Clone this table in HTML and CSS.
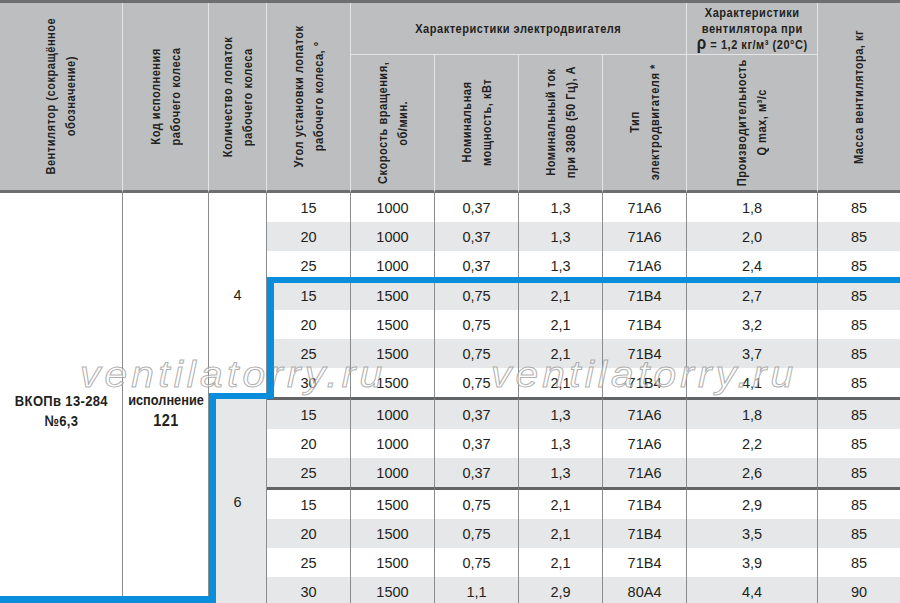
FILE: index.html
```html
<!DOCTYPE html>
<html lang="ru">
<head>
<meta charset="utf-8">
<title>ВКОПв 13-284 №6,3</title>
<link rel="stylesheet" href="styles.css">
</head>
<body>
<div class="sheet">
<table class="spec">
<colgroup>
<col class="c1"><col class="c2"><col class="c3"><col class="c4"><col class="c5"><col class="c6"><col class="c7"><col class="c8"><col class="c9"><col class="c10">
</colgroup>
<thead>
<tr class="h1">
<th rowspan="2" class="full"><div class="vbox"><div class="v">Вентилятор (сокращённое<br>обозначение)</div></div></th>
<th rowspan="2" class="full"><div class="vbox"><div class="v">Код исполнения<br>рабочего колеса</div></div></th>
<th rowspan="2" class="full"><div class="vbox"><div class="v">Количество лопаток<br>рабочего колеса</div></div></th>
<th rowspan="2" class="full"><div class="vbox"><div class="v">Угол установки лопаток<br>рабочего колеса, °</div></div></th>
<th colspan="4" class="grp"><div class="hz"><span>Характеристики электродвигателя</span></div></th>
<th class="grp grp2"><div class="hz"><span>Характеристики<br>вентилятора при<br><span class="rho">ρ</span> = 1,2 кг/м³ (20°C)</span></div></th>
<th rowspan="2" class="full last"><div class="vbox"><div class="v">Масса вентилятора, кг</div></div></th>
</tr>
<tr class="h2">
<th class="sub"><div class="vbox"><div class="v">Скорость вращения,<br>об/мин.</div></div></th>
<th class="sub"><div class="vbox"><div class="v">Номинальная<br>мощность, кВт</div></div></th>
<th class="sub"><div class="vbox"><div class="v">Номинальный ток<br>при 380В (50 Гц), А</div></div></th>
<th class="sub"><div class="vbox"><div class="v">Тип<br>электродвигателя *</div></div></th>
<th class="sub"><div class="vbox"><div class="v">Производительность<br>Q max, м³/с</div></div></th>
</tr>
</thead>
<tbody>
<tr class="r">
<td rowspan="14" class="name"><div class="hz"><span>ВКОПв 13-284<br>№6,3</span></div></td>
<td rowspan="14" class="code"><div class="hz"><span><span class="code-a">исполнение</span><br><span class="code-b">121</span></span></div></td>
<td rowspan="7" class="blades">4</td>
<td>15</td><td>1000</td><td>0,37</td><td>1,3</td><td>71A6</td><td>1,8</td><td class="last">85</td>
</tr>
<tr class="r alt"><td>20</td><td>1000</td><td>0,37</td><td>1,3</td><td>71A6</td><td>2,0</td><td class="last">85</td></tr>
<tr class="r tall"><td>25</td><td>1000</td><td>0,37</td><td>1,3</td><td>71A6</td><td>2,4</td><td class="last">85</td></tr>
<tr class="r alt"><td>15</td><td>1500</td><td>0,75</td><td>2,1</td><td>71B4</td><td>2,7</td><td class="last">85</td></tr>
<tr class="r"><td>20</td><td>1500</td><td>0,75</td><td>2,1</td><td>71B4</td><td>3,2</td><td class="last">85</td></tr>
<tr class="r alt"><td>25</td><td>1500</td><td>0,75</td><td>2,1</td><td>71B4</td><td>3,7</td><td class="last">85</td></tr>
<tr class="r"><td>30</td><td>1500</td><td>0,75</td><td>2,1</td><td>71B4</td><td>4,1</td><td class="last">85</td></tr>
<tr class="r alt sep">
<td rowspan="7" class="blades nosep">6</td>
<td>15</td><td>1000</td><td>0,37</td><td>1,3</td><td>71A6</td><td>1,8</td><td class="last">85</td>
</tr>
<tr class="r"><td>20</td><td>1000</td><td>0,37</td><td>1,3</td><td>71A6</td><td>2,2</td><td class="last">85</td></tr>
<tr class="r alt"><td>25</td><td>1000</td><td>0,37</td><td>1,3</td><td>71A6</td><td>2,6</td><td class="last">85</td></tr>
<tr class="r sep"><td>15</td><td>1500</td><td>0,75</td><td>2,1</td><td>71B4</td><td>2,9</td><td class="last">85</td></tr>
<tr class="r alt"><td>20</td><td>1500</td><td>0,75</td><td>2,1</td><td>71B4</td><td>3,5</td><td class="last">85</td></tr>
<tr class="r"><td>25</td><td>1500</td><td>0,75</td><td>2,1</td><td>71B4</td><td>3,9</td><td class="last">85</td></tr>
<tr class="r alt"><td>30</td><td>1500</td><td>1,1</td><td>2,9</td><td>80A4</td><td>4,4</td><td class="last">90</td></tr>
</tbody>
</table>
<div class="wm wm1">ventilatorry.ru</div>
<div class="wm wm2">ventilatorry.ru</div>
<svg class="frame" width="900" height="603" viewBox="0 0 900 603" aria-hidden="true">
<rect x="267" y="277" width="633" height="6"/>
<rect x="267" y="277" width="7" height="122"/>
<rect x="209" y="393" width="65" height="6"/>
<rect x="209" y="393" width="7" height="210"/>
<rect x="0" y="596" width="216" height="7"/>
</svg>
</div>
</body>
</html>
```
FILE: styles.css
```css
html, body {
  margin: 0;
  padding: 0;
  background: #ffffff;
}

.sheet {
  position: relative;
  width: 900px;
  height: 603px;
  overflow: hidden;
}

.spec {
  width: 900px;
  table-layout: fixed;
  border-collapse: separate;
  border-spacing: 0;
  border-top: 3px solid #6d6e70;
  font-family: "Liberation Sans", Arial, sans-serif;
  color: #231f20;
}

.c1 { width: 123px; }
.c2 { width: 86px; }
.c3 { width: 58px; }
.c4 { width: 84px; }
.c5 { width: 84px; }
.c6 { width: 84px; }
.c7 { width: 84px; }
.c8 { width: 84px; }
.c9 { width: 131px; }
.c10 { width: 82px; }

thead th {
  background: #bcbec0;
  padding: 0;
  font-family: "Liberation Sans", Arial, sans-serif;
  font-weight: bold;
  font-size: 13px;
  letter-spacing: 0.6px;
  color: #231f20;
  text-align: center;
  vertical-align: middle;
  border-right: 1px solid #e4e5e6;
  line-height: 16px;
}

thead th.last { border-right: 0; }

.h1 { height: 52px; }
.h2 { height: 138px; }

.full, .sub {
  border-bottom: 3px solid #6d6e70;
}

.grp {
  border-bottom: 1px solid #e4e5e6;
}

.rho {
  font-size: 18px;
  line-height: 0;
}

/* box that holds a rotated label at a fixed size */
.vbox {
  display: flex;
  align-items: center;
  justify-content: center;
}

.full .vbox { height: 184px; }
.sub .vbox { height: 134px; }

/* rotated header labels, read bottom to top, condensed along the line */
.v {
  flex: none;
  writing-mode: vertical-rl;
  transform: rotate(180deg) scaleY(0.85);
  line-height: 20px;
  text-align: center;
  white-space: nowrap;
}

/* horizontal condensed labels */
.hz {
  display: flex;
  justify-content: center;
}

.hz > span {
  display: block;
  flex: none;
  white-space: nowrap;
  text-align: center;
  transform: scaleX(0.85);
}

tbody td {
  padding: 0;
  text-align: center;
  vertical-align: middle;
  font-size: 14.5px;
  border-right: 1px solid #8a8b8d;
  background: #ffffff;
}

tbody td.last { border-right: 0; }

.r { height: 29px; }
.r.tall { height: 30px; }
.r.sep { height: 32px; }
.r.sep td { border-top: 3px solid #636466; }
.r.sep td.nosep { border-top: 0; }

.r.alt td { background: #e6e7e8; }

.name, .code {
  font-weight: bold;
  line-height: 20px;
  padding-top: 22px;
}

.name { font-size: 15.5px; letter-spacing: 0.4px; }
.name .hz > span { transform: scaleX(0.84); }

.code .hz > span { transform: scaleX(0.88); }
.code-a { font-size: 14.5px; }
.code-b { font-size: 16.5px; letter-spacing: 0.5px; }

.blades { font-size: 14.5px; }

.wm {
  position: absolute;
  top: 356px;
  font-family: "Liberation Sans", Arial, sans-serif;
  font-style: italic;
  font-size: 37px;
  line-height: 38px;
  letter-spacing: 3.8px;
  color: rgba(255, 255, 255, 0.55);
  -webkit-text-stroke: 1px rgba(150, 150, 150, 0.75);
  transform: scaleX(1.1);
  transform-origin: left top;
  white-space: nowrap;
  pointer-events: none;
}

.wm1 { left: 80px; }
.wm2 { left: 491px; }

.frame {
  position: absolute;
  left: 0;
  top: 0;
  fill: #0a8ddb;
  pointer-events: none;
}
```
